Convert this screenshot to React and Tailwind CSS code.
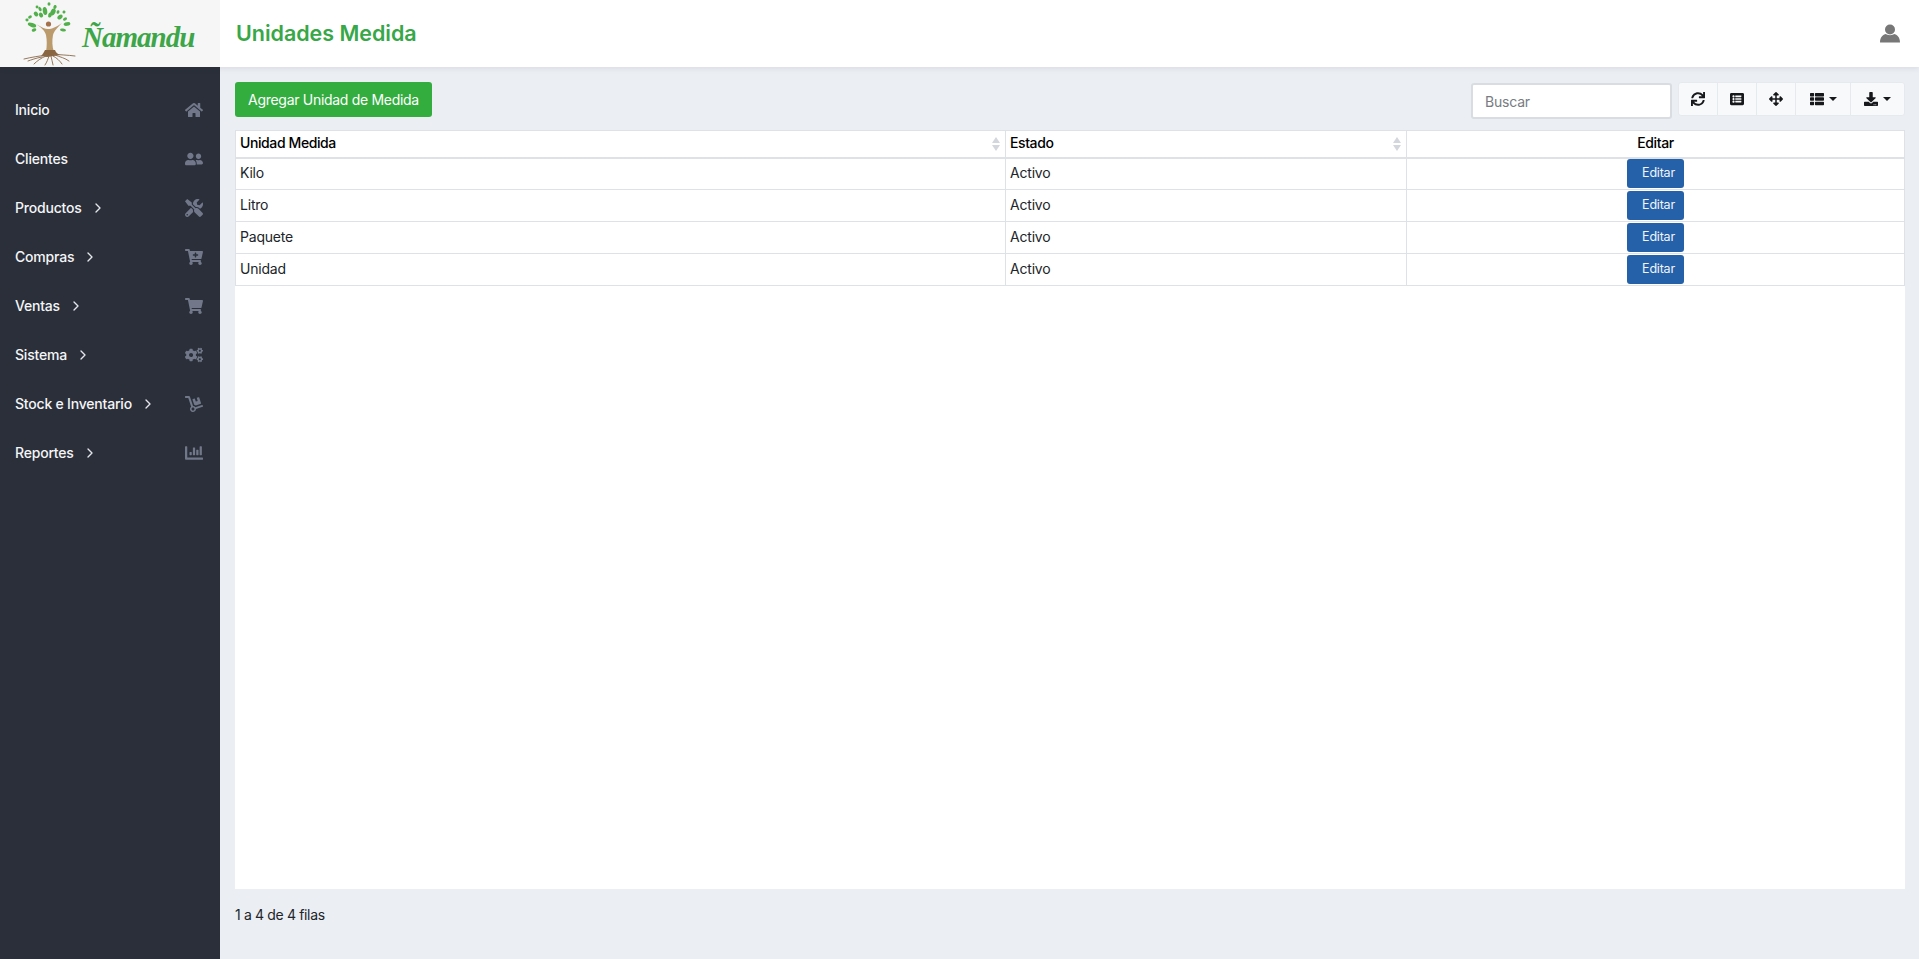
import { FaHome, FaUserFriends, FaTools, FaCartPlus, FaShoppingCart, FaCogs, FaDolly, FaChartBar, FaSync, FaListAlt, FaArrowsAlt, FaThList, FaDownload } from 'react-icons/fa';
import { LuChevronRight } from 'react-icons/lu';

const MENU = [
  { label: 'Inicio', icon: FaHome },
  { label: 'Clientes', icon: FaUserFriends },
  { label: 'Productos', icon: FaTools, sub: true },
  { label: 'Compras', icon: FaCartPlus, sub: true },
  { label: 'Ventas', icon: FaShoppingCart, sub: true },
  { label: 'Sistema', icon: FaCogs, sub: true },
  { label: 'Stock e Inventario', icon: FaDolly, sub: true },
  { label: 'Reportes', icon: FaChartBar, sub: true },
];

const ROWS = ['Kilo', 'Litro', 'Paquete', 'Unidad'];

const LEAVES = [
  [45, 10, 2.2, 4, -10], [40, 8, 1.4, 2.4, -30], [53, 11, 2.4, 3.6, 25], [36, 13, 2, 2.6, -40], [41, 14, 2, 2.6, -30],
  [50, 14, 1.8, 2.6, 15], [60, 16, 3, 2, -35], [30, 16, 2, 1.4, -30], [64, 11, 1.5, 1.5, 20], [32, 24, 4.4, 2, 20],
  [67, 23, 3.4, 1.8, -10], [27, 19, 1.6, 1.4, 0], [65, 18, 2.2, 1.4, -30], [34, 29, 2.4, 1.5, -20], [63, 29, 3, 1.5, 10],
  [55, 6, 1.6, 2, 20], [37, 6, 1.4, 1.4, 0], [49, 3, 1.5, 1.8, 0], [58, 11, 1.4, 1.8, 20],
];

function LogoTree() {
  return (
    <svg width="60" height="66" viewBox="22 0 60 66" className="shrink-0">
      {LEAVES.map(([cx, cy, rx, ry, rot], i) => (
        <ellipse key={i} cx={cx} cy={cy} rx={rx} ry={ry} transform={`rotate(${rot} ${cx} ${cy})`} fill="#52b04a" />
      ))}
      <circle cx="48.5" cy="23" r="2.6" fill="#a5714a" />
      <path d="M36 23 C41 26 45 28 48 28 C52 28 56 26 62 22 C57 27 54 30 53 34 C52 40 52 45 54 51 L46 51 C47 45 47 39 46 34 C45 30 41 26 36 23Z" fill="#bb9a6c" />
      <path d="M45 49 L55 49 C56 52 58 53 60 54 L47 56 L41 55 C43 53 44 51 45 49Z" fill="#8a6541" />
      <g fill="none" stroke="#8a6a4c" strokeWidth="0.9" strokeLinecap="round">
        <path d="M47 54 C40 55 32 56 24 58" />
        <path d="M52 53 C60 54 68 54 75 55" />
        <path d="M46 55 C41 57 37 60 34 63" />
        <path d="M49 55 C48 58 47 61 45 64" />
        <path d="M51 55 C52 58 52 61 53 64" />
        <path d="M53 55 C57 57 60 60 62 63" />
        <path d="M42 56 C36 57 31 59 28 60" />
        <path d="M55 54 C60 56 65 57 69 60" />
      </g>
    </svg>
  );
}

function UserIcon() {
  return (
    <svg width="20" height="19" viewBox="0 0 20 19" className="ml-auto mr-[19px]" fill="#777777">
      <circle cx="10" cy="5.5" r="5" />
      <path d="M6 10 C7 11.5 13 11.5 14 10 C17 10.5 20 13 20 18.5 L0 18.5 C0 13 3 10.5 6 10Z" />
    </svg>
  );
}

function SortArrows() {
  return (
    <svg width="8" height="14" viewBox="0 0 8 14" className="absolute right-[5px] top-[6px]">
      <path d="M4 0 L8 6 L0 6Z" fill="#d3d6dc" />
      <path d="M4 14 L8 8 L0 8Z" fill="#d3d6dc" />
    </svg>
  );
}

function ToolButton({ icon: Icon, caret, width }) {
  return (
    <button className={`flex items-center justify-center gap-[5px] h-full border-r border-[#e6e9ee] last:border-r-0 text-[#16181b] ${width}`}>
      <Icon className="text-[14px]" />
      {caret && <span className="w-0 h-0 border-x-[4px] border-x-transparent border-t-[4px] border-t-[#16181b]" />}
    </button>
  );
}

export default function App() {
  return (
    <div className="flex flex-col h-screen bg-[#ebeef3] font-['Inter','Liberation_Sans',sans-serif] text-[14px] tracking-[-0.2px] text-[#212529] overflow-hidden">
      {/* top bar */}
      <header className="flex items-center h-[67px] shrink-0 bg-white shadow-[0_1px_6px_rgba(40,50,70,0.1)] z-10">
        <div className="flex items-center w-[220px] h-full shrink-0 bg-[#f6f6f6] pl-[22px]">
          <LogoTree />
          <span className="pt-[8px] font-['Liberation_Serif',serif] italic font-bold text-[29px] leading-none tracking-[-1px] text-[#3ca648]">Ñamandu</span>
        </div>
        <h1 className="ml-[16px] text-[21.5px] font-semibold tracking-[-0.03px] text-[#38a748]">Unidades Medida</h1>
        <UserIcon />
      </header>

      <div className="flex flex-1 min-h-0">
        {/* sidebar */}
        <aside className="w-[220px] shrink-0 bg-[#2a2f3a] pt-[18px]">
          {MENU.map(({ label, icon: Icon, sub }) => (
            <div key={label} className="flex items-center h-[49px] pl-[15px] pr-[17px] font-medium text-[#f4f5f7]">
              <span>{label}</span>
              {sub && <LuChevronRight className="ml-[8px] text-[16px] text-[#e4e6ea]" />}
              <Icon className="ml-auto text-[18px] text-[#727889]" />
            </div>
          ))}
        </aside>

        {/* content */}
        <main className="flex-1 flex flex-col min-w-0 pl-[15px] pr-[14px] pt-[15px]">
          <div className="flex items-start h-[48px] shrink-0">
            <button className="h-[35px] w-[197px] pb-[1px] rounded-[3px] bg-[#34ad3f] text-white tracking-[-0.3px]">Agregar Unidad de Medida</button>
            <input
              placeholder="Buscar"
              className="ml-auto mt-[1px] w-[201px] h-[36px] rounded-[3px] border-2 border-[#d9dce1] bg-white px-[12px] text-[14px] placeholder:text-[#777c82]"
            />
            <div className="flex ml-[6px] h-[34px] rounded-[3px] bg-[#f8f9fa] border border-[#e6e9ee]">
              <ToolButton icon={FaSync} width="w-[39px]" />
              <ToolButton icon={FaListAlt} width="w-[39px]" />
              <ToolButton icon={FaArrowsAlt} width="w-[39px]" />
              <ToolButton icon={FaThList} caret width="w-[55px]" />
              <ToolButton icon={FaDownload} caret width="w-[53px]" />
            </div>
          </div>

          <div className="h-[759px] shrink-0 bg-white">
            <table className="w-full table-fixed border-collapse">
              <colgroup>
                <col className="w-[770px]" />
                <col className="w-[401px]" />
                <col />
              </colgroup>
              <thead>
                <tr className="h-[27px] border border-[#dee2e6] border-b-2 tracking-[-0.4px]">
                  <th className="relative px-[4px] pb-[2px] text-left font-medium text-black border-r border-[#dee2e6]">Unidad Medida<SortArrows /></th>
                  <th className="relative px-[4px] pb-[2px] text-left font-medium text-black border-r border-[#dee2e6]">Estado<SortArrows /></th>
                  <th className="px-[4px] pb-[2px] text-center font-medium text-black">Editar</th>
                </tr>
              </thead>
              <tbody>
                {ROWS.map(name => (
                  <tr key={name} className="h-[32px] border border-[#dee2e6]">
                    <td className="px-[4px] pb-[2px] border-r border-[#dee2e6]">{name}</td>
                    <td className="px-[4px] pb-[2px] border-r border-[#dee2e6]">Activo</td>
                    <td className="text-center">
                      <button className="w-[57px] h-[29px] pl-[14px] pr-[8px] rounded-[3px] bg-[#2561a8] text-[12.5px] text-[#f1f5fa] align-middle">Editar</button>
                    </td>
                  </tr>
                ))}
              </tbody>
            </table>
          </div>

          <p className="mt-[15px] tracking-[-0.35px]">1 a 4 de 4 filas</p>
        </main>
      </div>
    </div>
  );
}
